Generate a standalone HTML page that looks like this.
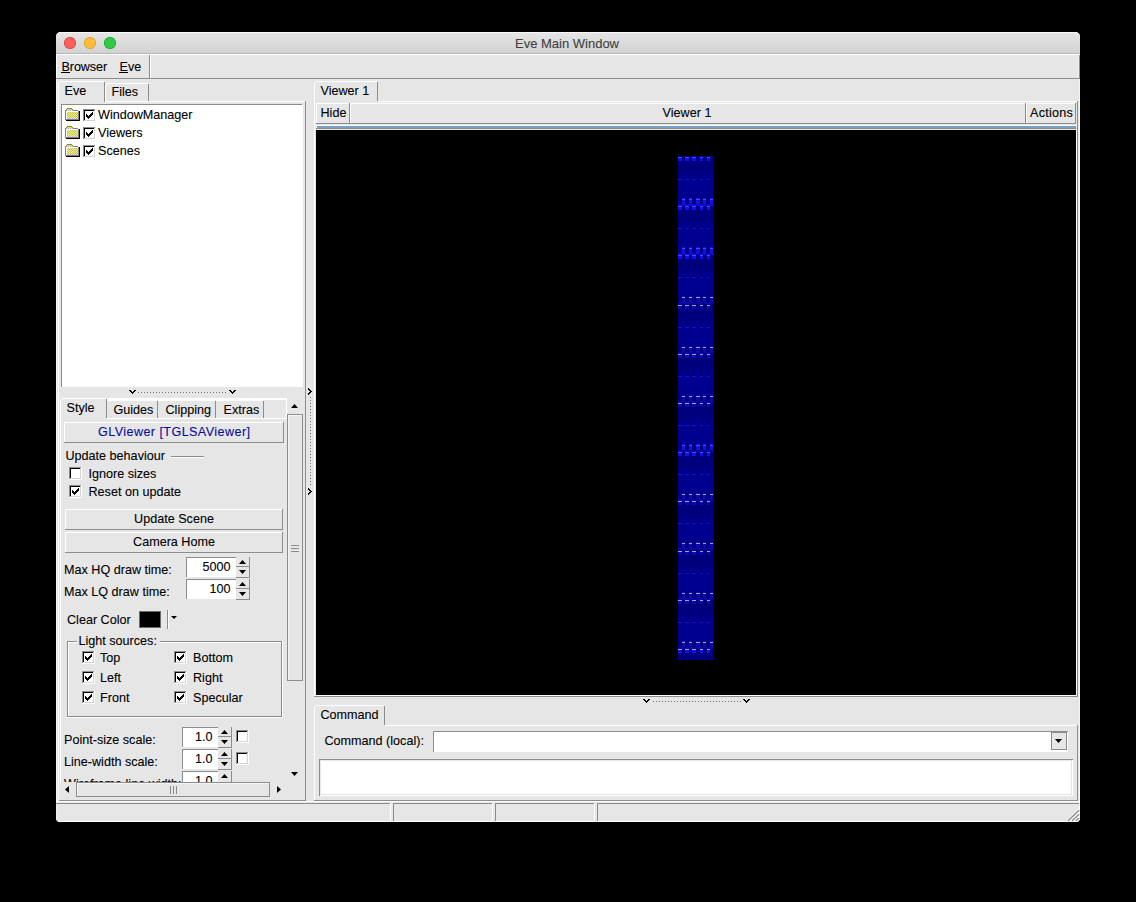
<!DOCTYPE html>
<html><head><meta charset="utf-8">
<style>
*{margin:0;padding:0;box-sizing:border-box}
html,body{width:1136px;height:902px;background:#000;overflow:hidden}
body{position:relative;font-family:"Liberation Sans",sans-serif;font-size:12.6px;color:#000}
.a{position:absolute;display:block}
.t{position:absolute;white-space:nowrap;line-height:normal;-webkit-text-stroke:0.1px currentColor}
</style></head><body>
<div class="a" style="left:56px;top:32px;width:1024px;height:790px;background:#e6e6e6;border-radius:5px 5px 3px 3px"></div>
<div class="a" style="left:56px;top:32px;width:1024px;height:21px;background:linear-gradient(#e6e6e6,#d2d2d2);border-radius:5px 5px 0 0;box-shadow:inset 0 1px 0 #f8f8f8"></div>
<div class="a" style="left:56px;top:53px;width:1024px;height:1px;background:#b6b6b6;"></div>
<div class="a" style="left:64px;top:37px;width:12px;height:12px;border-radius:50%;background:#fc605c;box-shadow:inset 0 0 0 0.8px #e0443e"></div>
<div class="a" style="left:84px;top:37px;width:12px;height:12px;border-radius:50%;background:#fdbc40;box-shadow:inset 0 0 0 0.8px #dea123"></div>
<div class="a" style="left:104px;top:37px;width:12px;height:12px;border-radius:50%;background:#34c84a;box-shadow:inset 0 0 0 0.8px #1aab29"></div>
<div class="t" style="left:267.0px;width:600px;text-align:center;top:36.23px;font-size:13px;color:#404040;letter-spacing:0px">Eve Main Window</div>
<div class="a" style="left:56px;top:54px;width:1024px;height:1px;background:#ffffff;"></div>
<div class="a" style="left:56px;top:54px;width:1px;height:25px;background:#ffffff;"></div>
<div class="a" style="left:56px;top:78px;width:1024px;height:1px;background:#8c8c8c;"></div>
<div class="a" style="left:149px;top:55px;width:1px;height:23px;background:#8c8c8c;"></div>
<div class="a" style="left:150px;top:55px;width:1px;height:23px;background:#ffffff;"></div>
<div class="t" style="left:61.5px;top:59.60px;font-size:12.6px;color:#000;letter-spacing:-0.1px">Browser</div>
<div class="t" style="left:119.5px;top:59.60px;font-size:12.6px;color:#000;">Eve</div>
<div class="a" style="left:61px;top:72px;width:9px;height:1px;background:#000;"></div>
<div class="a" style="left:119px;top:72px;width:9px;height:1px;background:#000;"></div>
<div class="a" style="left:1079px;top:79px;width:1px;height:743px;background:#f4f4f4;"></div>
<div class="a" style="left:56px;top:79px;width:1px;height:724px;background:#f8f8f8;"></div>
<div class="a" style="left:1079px;top:55px;width:1px;height:24px;background:#8c8c8c;"></div>
<div class="a" style="left:1078px;top:55px;width:1px;height:23px;background:#f0f0f0;"></div>
<div class="a" style="left:107px;top:83px;width:41px;height:1px;background:#ffffff;"></div>
<div class="a" style="left:106px;top:84px;width:1px;height:1px;background:#ffffff;"></div>
<div class="a" style="left:105px;top:85px;width:1px;height:17px;background:#ffffff;"></div>
<div class="a" style="left:148px;top:84px;width:1px;height:17px;background:#8c8c8c;"></div>
<div class="t" style="left:111.5px;top:84.60px;font-size:12.6px;color:#000;">Files</div>
<div class="a" style="left:60px;top:81px;width:44px;height:1px;background:#ffffff;"></div>
<div class="a" style="left:58px;top:83px;width:1px;height:20px;background:#ffffff;"></div>
<div class="a" style="left:59px;top:82px;width:1px;height:1px;background:#ffffff;"></div>
<div class="a" style="left:104px;top:82px;width:1px;height:20px;background:#8c8c8c;"></div>
<div class="t" style="left:64.5px;top:83.60px;font-size:12.6px;color:#000;">Eve</div>
<div class="a" style="left:105px;top:101px;width:200px;height:1px;background:#ffffff;"></div>
<div class="a" style="left:58px;top:101px;width:1px;height:300px;background:#ffffff;"></div>
<div class="a" style="left:305px;top:101px;width:1px;height:300px;background:#8c8c8c;"></div>
<div class="a" style="left:62px;top:105px;width:241px;height:282px;background:#ffffff;"></div>
<div class="a" style="left:61px;top:104px;width:241px;height:1px;background:#8c8c8c;"></div>
<div class="a" style="left:61px;top:104px;width:1px;height:283px;background:#8c8c8c;"></div>
<svg class="a" style="left:65px;top:108px" width="16" height="13" shape-rendering="crispEdges"><path d="M2 0h1v1h-1zM3 0h1v1h-1zM4 0h1v1h-1zM5 0h1v1h-1zM6 0h1v1h-1zM1 1h1v1h-1zM7 1h1v1h-1zM0 2h1v1h-1zM8 2h1v1h-1zM9 2h1v1h-1zM10 2h1v1h-1zM11 2h1v1h-1zM12 2h1v1h-1zM0 3h1v1h-1zM0 4h1v1h-1zM0 5h1v1h-1zM0 6h1v1h-1zM0 7h1v1h-1zM0 8h1v1h-1zM0 9h1v1h-1zM0 10h1v1h-1zM0 11h1v1h-1zM13 3h1v1h-1zM13 4h1v1h-1zM13 5h1v1h-1zM13 6h1v1h-1zM13 7h1v1h-1zM13 8h1v1h-1zM13 9h1v1h-1zM13 10h1v1h-1zM13 11h1v1h-1zM0 11h1v1h-1zM1 11h1v1h-1zM2 11h1v1h-1zM3 11h1v1h-1zM4 11h1v1h-1zM5 11h1v1h-1zM6 11h1v1h-1zM7 11h1v1h-1zM8 11h1v1h-1zM9 11h1v1h-1zM10 11h1v1h-1zM11 11h1v1h-1zM12 11h1v1h-1zM13 11h1v1h-1z" fill="#808080"/><path d="M14 3h1v1h-1zM14 4h1v1h-1zM14 5h1v1h-1zM14 6h1v1h-1zM14 7h1v1h-1zM14 8h1v1h-1zM14 9h1v1h-1zM14 10h1v1h-1zM14 11h1v1h-1zM14 12h1v1h-1zM1 12h1v1h-1zM2 12h1v1h-1zM3 12h1v1h-1zM4 12h1v1h-1zM5 12h1v1h-1zM6 12h1v1h-1zM7 12h1v1h-1zM8 12h1v1h-1zM9 12h1v1h-1zM10 12h1v1h-1zM11 12h1v1h-1zM12 12h1v1h-1zM13 12h1v1h-1zM14 12h1v1h-1z" fill="#000"/><path d="M1 3h1v1h-1zM2 3h1v1h-1zM3 3h1v1h-1zM4 3h1v1h-1zM5 3h1v1h-1zM6 3h1v1h-1zM7 3h1v1h-1zM8 3h1v1h-1zM9 3h1v1h-1zM10 3h1v1h-1zM11 3h1v1h-1zM12 3h1v1h-1zM1 2h1v1h-1zM1 3h1v1h-1zM1 4h1v1h-1zM1 5h1v1h-1zM1 6h1v1h-1zM1 7h1v1h-1zM1 8h1v1h-1zM1 9h1v1h-1zM1 10h1v1h-1z" fill="#fff"/><path d="M3 1h1v1h-1zM5 1h1v1h-1zM2 2h1v1h-1zM4 2h1v1h-1zM6 2h1v1h-1zM2 4h1v1h-1zM4 4h1v1h-1zM6 4h1v1h-1zM8 4h1v1h-1zM10 4h1v1h-1zM12 4h1v1h-1zM3 5h1v1h-1zM5 5h1v1h-1zM7 5h1v1h-1zM9 5h1v1h-1zM11 5h1v1h-1zM2 6h1v1h-1zM4 6h1v1h-1zM6 6h1v1h-1zM8 6h1v1h-1zM10 6h1v1h-1zM12 6h1v1h-1zM3 7h1v1h-1zM5 7h1v1h-1zM7 7h1v1h-1zM9 7h1v1h-1zM11 7h1v1h-1zM2 8h1v1h-1zM4 8h1v1h-1zM6 8h1v1h-1zM8 8h1v1h-1zM10 8h1v1h-1zM12 8h1v1h-1zM3 9h1v1h-1zM5 9h1v1h-1zM7 9h1v1h-1zM9 9h1v1h-1zM11 9h1v1h-1zM2 10h1v1h-1zM4 10h1v1h-1zM6 10h1v1h-1zM8 10h1v1h-1zM10 10h1v1h-1zM12 10h1v1h-1z" fill="#ffff00"/><path d="M2 1h1v1h-1zM4 1h1v1h-1zM6 1h1v1h-1zM1 2h1v1h-1zM3 2h1v1h-1zM5 2h1v1h-1zM7 2h1v1h-1zM3 4h1v1h-1zM5 4h1v1h-1zM7 4h1v1h-1zM9 4h1v1h-1zM11 4h1v1h-1zM2 5h1v1h-1zM4 5h1v1h-1zM6 5h1v1h-1zM8 5h1v1h-1zM10 5h1v1h-1zM12 5h1v1h-1zM3 6h1v1h-1zM5 6h1v1h-1zM7 6h1v1h-1zM9 6h1v1h-1zM11 6h1v1h-1zM2 7h1v1h-1zM4 7h1v1h-1zM6 7h1v1h-1zM8 7h1v1h-1zM10 7h1v1h-1zM12 7h1v1h-1zM3 8h1v1h-1zM5 8h1v1h-1zM7 8h1v1h-1zM9 8h1v1h-1zM11 8h1v1h-1zM2 9h1v1h-1zM4 9h1v1h-1zM6 9h1v1h-1zM8 9h1v1h-1zM10 9h1v1h-1zM12 9h1v1h-1zM3 10h1v1h-1zM5 10h1v1h-1zM7 10h1v1h-1zM9 10h1v1h-1zM11 10h1v1h-1z" fill="#b8b8c8"/></svg>
<div class="a" style="left:83px;top:109px;width:13px;height:1px;background:#8c8c8c;"></div>
<div class="a" style="left:83px;top:109px;width:1px;height:13px;background:#8c8c8c;"></div>
<div class="a" style="left:84px;top:110px;width:11px;height:1px;background:#000;"></div>
<div class="a" style="left:84px;top:110px;width:1px;height:11px;background:#000;"></div>
<div class="a" style="left:85px;top:111px;width:9px;height:9px;background:#ffffff;"></div>
<div class="a" style="left:84px;top:120px;width:11px;height:1px;background:#d4d4d4;"></div>
<div class="a" style="left:94px;top:110px;width:1px;height:11px;background:#d4d4d4;"></div>
<div class="a" style="left:83px;top:121px;width:13px;height:1px;background:#ffffff;"></div>
<div class="a" style="left:95px;top:109px;width:1px;height:13px;background:#ffffff;"></div>
<svg class="a" style="left:83px;top:109px" width="13" height="13" shape-rendering="crispEdges"><path d="M3 7h1v1h-1zM4 6h1v1h-1zM5 7h1v1h-1zM9 5h1v1h-1zM8 6h1v1h-1zM7 7h1v1h-1zM6 8h1v1h-1zM4 8h1v1h-1zM3 6h1v1h-1zM5 9h1v1h-1zM8 5h1v1h-1zM9 4h1v1h-1zM6 7h1v1h-1zM7 6h1v1h-1zM4 7h1v1h-1zM3 5h1v1h-1zM8 4h1v1h-1zM9 3h1v1h-1zM5 8h1v1h-1zM6 6h1v1h-1zM7 5h1v1h-1z" fill="#000"/></svg>
<div class="t" style="left:98px;top:107.60px;font-size:12.6px;color:#000;">WindowManager</div>
<svg class="a" style="left:65px;top:126px" width="16" height="13" shape-rendering="crispEdges"><path d="M2 0h1v1h-1zM3 0h1v1h-1zM4 0h1v1h-1zM5 0h1v1h-1zM6 0h1v1h-1zM1 1h1v1h-1zM7 1h1v1h-1zM0 2h1v1h-1zM8 2h1v1h-1zM9 2h1v1h-1zM10 2h1v1h-1zM11 2h1v1h-1zM12 2h1v1h-1zM0 3h1v1h-1zM0 4h1v1h-1zM0 5h1v1h-1zM0 6h1v1h-1zM0 7h1v1h-1zM0 8h1v1h-1zM0 9h1v1h-1zM0 10h1v1h-1zM0 11h1v1h-1zM13 3h1v1h-1zM13 4h1v1h-1zM13 5h1v1h-1zM13 6h1v1h-1zM13 7h1v1h-1zM13 8h1v1h-1zM13 9h1v1h-1zM13 10h1v1h-1zM13 11h1v1h-1zM0 11h1v1h-1zM1 11h1v1h-1zM2 11h1v1h-1zM3 11h1v1h-1zM4 11h1v1h-1zM5 11h1v1h-1zM6 11h1v1h-1zM7 11h1v1h-1zM8 11h1v1h-1zM9 11h1v1h-1zM10 11h1v1h-1zM11 11h1v1h-1zM12 11h1v1h-1zM13 11h1v1h-1z" fill="#808080"/><path d="M14 3h1v1h-1zM14 4h1v1h-1zM14 5h1v1h-1zM14 6h1v1h-1zM14 7h1v1h-1zM14 8h1v1h-1zM14 9h1v1h-1zM14 10h1v1h-1zM14 11h1v1h-1zM14 12h1v1h-1zM1 12h1v1h-1zM2 12h1v1h-1zM3 12h1v1h-1zM4 12h1v1h-1zM5 12h1v1h-1zM6 12h1v1h-1zM7 12h1v1h-1zM8 12h1v1h-1zM9 12h1v1h-1zM10 12h1v1h-1zM11 12h1v1h-1zM12 12h1v1h-1zM13 12h1v1h-1zM14 12h1v1h-1z" fill="#000"/><path d="M1 3h1v1h-1zM2 3h1v1h-1zM3 3h1v1h-1zM4 3h1v1h-1zM5 3h1v1h-1zM6 3h1v1h-1zM7 3h1v1h-1zM8 3h1v1h-1zM9 3h1v1h-1zM10 3h1v1h-1zM11 3h1v1h-1zM12 3h1v1h-1zM1 2h1v1h-1zM1 3h1v1h-1zM1 4h1v1h-1zM1 5h1v1h-1zM1 6h1v1h-1zM1 7h1v1h-1zM1 8h1v1h-1zM1 9h1v1h-1zM1 10h1v1h-1z" fill="#fff"/><path d="M3 1h1v1h-1zM5 1h1v1h-1zM2 2h1v1h-1zM4 2h1v1h-1zM6 2h1v1h-1zM2 4h1v1h-1zM4 4h1v1h-1zM6 4h1v1h-1zM8 4h1v1h-1zM10 4h1v1h-1zM12 4h1v1h-1zM3 5h1v1h-1zM5 5h1v1h-1zM7 5h1v1h-1zM9 5h1v1h-1zM11 5h1v1h-1zM2 6h1v1h-1zM4 6h1v1h-1zM6 6h1v1h-1zM8 6h1v1h-1zM10 6h1v1h-1zM12 6h1v1h-1zM3 7h1v1h-1zM5 7h1v1h-1zM7 7h1v1h-1zM9 7h1v1h-1zM11 7h1v1h-1zM2 8h1v1h-1zM4 8h1v1h-1zM6 8h1v1h-1zM8 8h1v1h-1zM10 8h1v1h-1zM12 8h1v1h-1zM3 9h1v1h-1zM5 9h1v1h-1zM7 9h1v1h-1zM9 9h1v1h-1zM11 9h1v1h-1zM2 10h1v1h-1zM4 10h1v1h-1zM6 10h1v1h-1zM8 10h1v1h-1zM10 10h1v1h-1zM12 10h1v1h-1z" fill="#ffff00"/><path d="M2 1h1v1h-1zM4 1h1v1h-1zM6 1h1v1h-1zM1 2h1v1h-1zM3 2h1v1h-1zM5 2h1v1h-1zM7 2h1v1h-1zM3 4h1v1h-1zM5 4h1v1h-1zM7 4h1v1h-1zM9 4h1v1h-1zM11 4h1v1h-1zM2 5h1v1h-1zM4 5h1v1h-1zM6 5h1v1h-1zM8 5h1v1h-1zM10 5h1v1h-1zM12 5h1v1h-1zM3 6h1v1h-1zM5 6h1v1h-1zM7 6h1v1h-1zM9 6h1v1h-1zM11 6h1v1h-1zM2 7h1v1h-1zM4 7h1v1h-1zM6 7h1v1h-1zM8 7h1v1h-1zM10 7h1v1h-1zM12 7h1v1h-1zM3 8h1v1h-1zM5 8h1v1h-1zM7 8h1v1h-1zM9 8h1v1h-1zM11 8h1v1h-1zM2 9h1v1h-1zM4 9h1v1h-1zM6 9h1v1h-1zM8 9h1v1h-1zM10 9h1v1h-1zM12 9h1v1h-1zM3 10h1v1h-1zM5 10h1v1h-1zM7 10h1v1h-1zM9 10h1v1h-1zM11 10h1v1h-1z" fill="#b8b8c8"/></svg>
<div class="a" style="left:83px;top:127px;width:13px;height:1px;background:#8c8c8c;"></div>
<div class="a" style="left:83px;top:127px;width:1px;height:13px;background:#8c8c8c;"></div>
<div class="a" style="left:84px;top:128px;width:11px;height:1px;background:#000;"></div>
<div class="a" style="left:84px;top:128px;width:1px;height:11px;background:#000;"></div>
<div class="a" style="left:85px;top:129px;width:9px;height:9px;background:#ffffff;"></div>
<div class="a" style="left:84px;top:138px;width:11px;height:1px;background:#d4d4d4;"></div>
<div class="a" style="left:94px;top:128px;width:1px;height:11px;background:#d4d4d4;"></div>
<div class="a" style="left:83px;top:139px;width:13px;height:1px;background:#ffffff;"></div>
<div class="a" style="left:95px;top:127px;width:1px;height:13px;background:#ffffff;"></div>
<svg class="a" style="left:83px;top:127px" width="13" height="13" shape-rendering="crispEdges"><path d="M3 7h1v1h-1zM4 6h1v1h-1zM5 7h1v1h-1zM9 5h1v1h-1zM8 6h1v1h-1zM7 7h1v1h-1zM6 8h1v1h-1zM4 8h1v1h-1zM3 6h1v1h-1zM5 9h1v1h-1zM8 5h1v1h-1zM9 4h1v1h-1zM6 7h1v1h-1zM7 6h1v1h-1zM4 7h1v1h-1zM3 5h1v1h-1zM8 4h1v1h-1zM9 3h1v1h-1zM5 8h1v1h-1zM6 6h1v1h-1zM7 5h1v1h-1z" fill="#000"/></svg>
<div class="t" style="left:98px;top:125.60px;font-size:12.6px;color:#000;">Viewers</div>
<svg class="a" style="left:65px;top:144px" width="16" height="13" shape-rendering="crispEdges"><path d="M2 0h1v1h-1zM3 0h1v1h-1zM4 0h1v1h-1zM5 0h1v1h-1zM6 0h1v1h-1zM1 1h1v1h-1zM7 1h1v1h-1zM0 2h1v1h-1zM8 2h1v1h-1zM9 2h1v1h-1zM10 2h1v1h-1zM11 2h1v1h-1zM12 2h1v1h-1zM0 3h1v1h-1zM0 4h1v1h-1zM0 5h1v1h-1zM0 6h1v1h-1zM0 7h1v1h-1zM0 8h1v1h-1zM0 9h1v1h-1zM0 10h1v1h-1zM0 11h1v1h-1zM13 3h1v1h-1zM13 4h1v1h-1zM13 5h1v1h-1zM13 6h1v1h-1zM13 7h1v1h-1zM13 8h1v1h-1zM13 9h1v1h-1zM13 10h1v1h-1zM13 11h1v1h-1zM0 11h1v1h-1zM1 11h1v1h-1zM2 11h1v1h-1zM3 11h1v1h-1zM4 11h1v1h-1zM5 11h1v1h-1zM6 11h1v1h-1zM7 11h1v1h-1zM8 11h1v1h-1zM9 11h1v1h-1zM10 11h1v1h-1zM11 11h1v1h-1zM12 11h1v1h-1zM13 11h1v1h-1z" fill="#808080"/><path d="M14 3h1v1h-1zM14 4h1v1h-1zM14 5h1v1h-1zM14 6h1v1h-1zM14 7h1v1h-1zM14 8h1v1h-1zM14 9h1v1h-1zM14 10h1v1h-1zM14 11h1v1h-1zM14 12h1v1h-1zM1 12h1v1h-1zM2 12h1v1h-1zM3 12h1v1h-1zM4 12h1v1h-1zM5 12h1v1h-1zM6 12h1v1h-1zM7 12h1v1h-1zM8 12h1v1h-1zM9 12h1v1h-1zM10 12h1v1h-1zM11 12h1v1h-1zM12 12h1v1h-1zM13 12h1v1h-1zM14 12h1v1h-1z" fill="#000"/><path d="M1 3h1v1h-1zM2 3h1v1h-1zM3 3h1v1h-1zM4 3h1v1h-1zM5 3h1v1h-1zM6 3h1v1h-1zM7 3h1v1h-1zM8 3h1v1h-1zM9 3h1v1h-1zM10 3h1v1h-1zM11 3h1v1h-1zM12 3h1v1h-1zM1 2h1v1h-1zM1 3h1v1h-1zM1 4h1v1h-1zM1 5h1v1h-1zM1 6h1v1h-1zM1 7h1v1h-1zM1 8h1v1h-1zM1 9h1v1h-1zM1 10h1v1h-1z" fill="#fff"/><path d="M3 1h1v1h-1zM5 1h1v1h-1zM2 2h1v1h-1zM4 2h1v1h-1zM6 2h1v1h-1zM2 4h1v1h-1zM4 4h1v1h-1zM6 4h1v1h-1zM8 4h1v1h-1zM10 4h1v1h-1zM12 4h1v1h-1zM3 5h1v1h-1zM5 5h1v1h-1zM7 5h1v1h-1zM9 5h1v1h-1zM11 5h1v1h-1zM2 6h1v1h-1zM4 6h1v1h-1zM6 6h1v1h-1zM8 6h1v1h-1zM10 6h1v1h-1zM12 6h1v1h-1zM3 7h1v1h-1zM5 7h1v1h-1zM7 7h1v1h-1zM9 7h1v1h-1zM11 7h1v1h-1zM2 8h1v1h-1zM4 8h1v1h-1zM6 8h1v1h-1zM8 8h1v1h-1zM10 8h1v1h-1zM12 8h1v1h-1zM3 9h1v1h-1zM5 9h1v1h-1zM7 9h1v1h-1zM9 9h1v1h-1zM11 9h1v1h-1zM2 10h1v1h-1zM4 10h1v1h-1zM6 10h1v1h-1zM8 10h1v1h-1zM10 10h1v1h-1zM12 10h1v1h-1z" fill="#ffff00"/><path d="M2 1h1v1h-1zM4 1h1v1h-1zM6 1h1v1h-1zM1 2h1v1h-1zM3 2h1v1h-1zM5 2h1v1h-1zM7 2h1v1h-1zM3 4h1v1h-1zM5 4h1v1h-1zM7 4h1v1h-1zM9 4h1v1h-1zM11 4h1v1h-1zM2 5h1v1h-1zM4 5h1v1h-1zM6 5h1v1h-1zM8 5h1v1h-1zM10 5h1v1h-1zM12 5h1v1h-1zM3 6h1v1h-1zM5 6h1v1h-1zM7 6h1v1h-1zM9 6h1v1h-1zM11 6h1v1h-1zM2 7h1v1h-1zM4 7h1v1h-1zM6 7h1v1h-1zM8 7h1v1h-1zM10 7h1v1h-1zM12 7h1v1h-1zM3 8h1v1h-1zM5 8h1v1h-1zM7 8h1v1h-1zM9 8h1v1h-1zM11 8h1v1h-1zM2 9h1v1h-1zM4 9h1v1h-1zM6 9h1v1h-1zM8 9h1v1h-1zM10 9h1v1h-1zM12 9h1v1h-1zM3 10h1v1h-1zM5 10h1v1h-1zM7 10h1v1h-1zM9 10h1v1h-1zM11 10h1v1h-1z" fill="#b8b8c8"/></svg>
<div class="a" style="left:83px;top:145px;width:13px;height:1px;background:#8c8c8c;"></div>
<div class="a" style="left:83px;top:145px;width:1px;height:13px;background:#8c8c8c;"></div>
<div class="a" style="left:84px;top:146px;width:11px;height:1px;background:#000;"></div>
<div class="a" style="left:84px;top:146px;width:1px;height:11px;background:#000;"></div>
<div class="a" style="left:85px;top:147px;width:9px;height:9px;background:#ffffff;"></div>
<div class="a" style="left:84px;top:156px;width:11px;height:1px;background:#d4d4d4;"></div>
<div class="a" style="left:94px;top:146px;width:1px;height:11px;background:#d4d4d4;"></div>
<div class="a" style="left:83px;top:157px;width:13px;height:1px;background:#ffffff;"></div>
<div class="a" style="left:95px;top:145px;width:1px;height:13px;background:#ffffff;"></div>
<svg class="a" style="left:83px;top:145px" width="13" height="13" shape-rendering="crispEdges"><path d="M3 7h1v1h-1zM4 6h1v1h-1zM5 7h1v1h-1zM9 5h1v1h-1zM8 6h1v1h-1zM7 7h1v1h-1zM6 8h1v1h-1zM4 8h1v1h-1zM3 6h1v1h-1zM5 9h1v1h-1zM8 5h1v1h-1zM9 4h1v1h-1zM6 7h1v1h-1zM7 6h1v1h-1zM4 7h1v1h-1zM3 5h1v1h-1zM8 4h1v1h-1zM9 3h1v1h-1zM5 8h1v1h-1zM6 6h1v1h-1zM7 5h1v1h-1z" fill="#000"/></svg>
<div class="t" style="left:98px;top:143.60px;font-size:12.6px;color:#000;">Scenes</div>
<svg class="a" style="left:129px;top:390px" width="7" height="4" shape-rendering="crispEdges"><path d="M0 0h1v1h-1zM1 0h1v1h-1zM1 1h1v1h-1zM2 1h1v1h-1zM2 2h1v1h-1zM3 2h1v1h-1zM3 3h1v1h-1zM4 2h1v1h-1zM4 1h1v1h-1zM5 1h1v1h-1zM5 0h1v1h-1zM6 0h1v1h-1z" fill="#000"/></svg>
<svg class="a" style="left:229px;top:390px" width="7" height="4" shape-rendering="crispEdges"><path d="M0 0h1v1h-1zM1 0h1v1h-1zM1 1h1v1h-1zM2 1h1v1h-1zM2 2h1v1h-1zM3 2h1v1h-1zM3 3h1v1h-1zM4 2h1v1h-1zM4 1h1v1h-1zM5 1h1v1h-1zM5 0h1v1h-1zM6 0h1v1h-1z" fill="#000"/></svg>
<div class="a" style="left:138px;top:392px;width:90px;height:1px;background:repeating-linear-gradient(90deg,#6e6e6e 0 1px,transparent 1px 3px)"></div>
<div class="a" style="left:107px;top:398px;width:180px;height:1px;background:#ffffff;"></div>
<div class="a" style="left:107px;top:399px;width:180px;height:1px;background:#ffffff;"></div>
<div class="a" style="left:286px;top:398px;width:1px;height:21px;background:#ffffff;"></div>
<div class="a" style="left:62px;top:398px;width:44px;height:1px;background:#ffffff;"></div>
<div class="a" style="left:60px;top:400px;width:1px;height:19px;background:#ffffff;"></div>
<div class="a" style="left:61px;top:399px;width:1px;height:1px;background:#ffffff;"></div>
<div class="a" style="left:106px;top:399px;width:1px;height:19px;background:#8c8c8c;"></div>
<div class="t" style="left:66.5px;top:400.60px;font-size:12.6px;color:#000;">Style</div>
<div class="a" style="left:107px;top:400px;width:50px;height:1px;background:#ffffff;"></div>
<div class="a" style="left:157px;top:401px;width:1px;height:17px;background:#8c8c8c;"></div>
<div class="t" style="left:113.5px;top:402.60px;font-size:12.6px;color:#000;">Guides</div>
<div class="a" style="left:158px;top:400px;width:57px;height:1px;background:#ffffff;"></div>
<div class="a" style="left:215px;top:401px;width:1px;height:17px;background:#8c8c8c;"></div>
<div class="t" style="left:165.5px;top:402.60px;font-size:12.6px;color:#000;">Clipping</div>
<div class="a" style="left:216px;top:400px;width:47px;height:1px;background:#ffffff;"></div>
<div class="a" style="left:263px;top:401px;width:1px;height:17px;background:#8c8c8c;"></div>
<div class="t" style="left:223.5px;top:402.60px;font-size:12.6px;color:#000;">Extras</div>
<div class="a" style="left:107px;top:418px;width:180px;height:1px;background:#ffffff;"></div>
<div class="a" style="left:60px;top:418px;width:1px;height:364px;background:#ffffff;"></div>
<div class="a" style="left:64px;top:422px;width:220px;height:1px;background:#ffffff;"></div>
<div class="a" style="left:64px;top:422px;width:1px;height:21px;background:#ffffff;"></div>
<div class="a" style="left:64px;top:442px;width:220px;height:1px;background:#8c8c8c;"></div>
<div class="a" style="left:283px;top:422px;width:1px;height:21px;background:#8c8c8c;"></div>
<div class="t" style="left:-125.79px;width:600px;text-align:center;top:424.60px;font-size:12.6px;color:#0c0c9a;letter-spacing:0.42px">GLViewer [TGLSAViewer]</div>
<div class="t" style="left:65.5px;top:448.60px;font-size:12.6px;color:#000;">Update behaviour</div>
<div class="a" style="left:171px;top:456px;width:33px;height:1px;background:#8c8c8c;"></div>
<div class="a" style="left:171px;top:457px;width:33px;height:1px;background:#ffffff;"></div>
<div class="a" style="left:69px;top:467px;width:13px;height:1px;background:#8c8c8c;"></div>
<div class="a" style="left:69px;top:467px;width:1px;height:13px;background:#8c8c8c;"></div>
<div class="a" style="left:70px;top:468px;width:11px;height:1px;background:#000;"></div>
<div class="a" style="left:70px;top:468px;width:1px;height:11px;background:#000;"></div>
<div class="a" style="left:71px;top:469px;width:9px;height:9px;background:#ffffff;"></div>
<div class="a" style="left:70px;top:478px;width:11px;height:1px;background:#d4d4d4;"></div>
<div class="a" style="left:80px;top:468px;width:1px;height:11px;background:#d4d4d4;"></div>
<div class="a" style="left:69px;top:479px;width:13px;height:1px;background:#ffffff;"></div>
<div class="a" style="left:81px;top:467px;width:1px;height:13px;background:#ffffff;"></div>
<div class="t" style="left:88.5px;top:466.60px;font-size:12.6px;color:#000;">Ignore sizes</div>
<div class="a" style="left:69px;top:485px;width:13px;height:1px;background:#8c8c8c;"></div>
<div class="a" style="left:69px;top:485px;width:1px;height:13px;background:#8c8c8c;"></div>
<div class="a" style="left:70px;top:486px;width:11px;height:1px;background:#000;"></div>
<div class="a" style="left:70px;top:486px;width:1px;height:11px;background:#000;"></div>
<div class="a" style="left:71px;top:487px;width:9px;height:9px;background:#ffffff;"></div>
<div class="a" style="left:70px;top:496px;width:11px;height:1px;background:#d4d4d4;"></div>
<div class="a" style="left:80px;top:486px;width:1px;height:11px;background:#d4d4d4;"></div>
<div class="a" style="left:69px;top:497px;width:13px;height:1px;background:#ffffff;"></div>
<div class="a" style="left:81px;top:485px;width:1px;height:13px;background:#ffffff;"></div>
<svg class="a" style="left:69px;top:485px" width="13" height="13" shape-rendering="crispEdges"><path d="M3 7h1v1h-1zM4 6h1v1h-1zM5 7h1v1h-1zM9 5h1v1h-1zM8 6h1v1h-1zM7 7h1v1h-1zM6 8h1v1h-1zM4 8h1v1h-1zM3 6h1v1h-1zM5 9h1v1h-1zM8 5h1v1h-1zM9 4h1v1h-1zM6 7h1v1h-1zM7 6h1v1h-1zM4 7h1v1h-1zM3 5h1v1h-1zM8 4h1v1h-1zM9 3h1v1h-1zM5 8h1v1h-1zM6 6h1v1h-1zM7 5h1v1h-1z" fill="#000"/></svg>
<div class="t" style="left:88.5px;top:484.60px;font-size:12.6px;color:#000;">Reset on update</div>
<div class="a" style="left:65px;top:509px;width:218px;height:1px;background:#ffffff;"></div>
<div class="a" style="left:65px;top:509px;width:1px;height:21px;background:#ffffff;"></div>
<div class="a" style="left:65px;top:529px;width:218px;height:1px;background:#8c8c8c;"></div>
<div class="a" style="left:282px;top:509px;width:1px;height:21px;background:#8c8c8c;"></div>
<div class="t" style="left:-126.0px;width:600px;text-align:center;top:512.10px;font-size:12.6px;color:#000;letter-spacing:0px">Update Scene</div>
<div class="a" style="left:65px;top:532px;width:218px;height:1px;background:#ffffff;"></div>
<div class="a" style="left:65px;top:532px;width:1px;height:21px;background:#ffffff;"></div>
<div class="a" style="left:65px;top:552px;width:218px;height:1px;background:#8c8c8c;"></div>
<div class="a" style="left:282px;top:532px;width:1px;height:21px;background:#8c8c8c;"></div>
<div class="t" style="left:-126.0px;width:600px;text-align:center;top:535.10px;font-size:12.6px;color:#000;letter-spacing:0px">Camera Home</div>
<div class="t" style="left:64px;top:562.60px;font-size:12.6px;color:#000;">Max HQ draw time:</div>
<div class="a" style="left:186px;top:557px;width:50px;height:20px;background:#ffffff;"></div>
<div class="a" style="left:186px;top:557px;width:50px;height:1px;background:#8c8c8c;"></div>
<div class="a" style="left:186px;top:557px;width:1px;height:20px;background:#8c8c8c;"></div>
<div class="t" style="right:905.5px;top:559.60px;font-size:12.6px;color:#000">5000</div>
<div class="a" style="left:236px;top:557px;width:14px;height:20px;background:#e6e6e6;"></div>
<div class="a" style="left:236px;top:566px;width:14px;height:1px;background:#8c8c8c;"></div>
<div class="a" style="left:249px;top:557px;width:1px;height:20px;background:#8c8c8c;"></div>
<div class="a" style="left:236px;top:577px;width:14px;height:1px;background:#8c8c8c;"></div>
<svg class="a" style="left:239px;top:560px" width="7" height="4"><polygon points="3.5,0 7,4 0,4" fill="#000"/></svg>
<svg class="a" style="left:239px;top:570px" width="7" height="4"><polygon points="0,0 7,0 3.5,4" fill="#000"/></svg>
<div class="t" style="left:64px;top:584.60px;font-size:12.6px;color:#000;">Max LQ draw time:</div>
<div class="a" style="left:186px;top:579px;width:50px;height:20px;background:#ffffff;"></div>
<div class="a" style="left:186px;top:579px;width:50px;height:1px;background:#8c8c8c;"></div>
<div class="a" style="left:186px;top:579px;width:1px;height:20px;background:#8c8c8c;"></div>
<div class="t" style="right:905.5px;top:581.60px;font-size:12.6px;color:#000">100</div>
<div class="a" style="left:236px;top:579px;width:14px;height:20px;background:#e6e6e6;"></div>
<div class="a" style="left:236px;top:588px;width:14px;height:1px;background:#8c8c8c;"></div>
<div class="a" style="left:249px;top:579px;width:1px;height:20px;background:#8c8c8c;"></div>
<div class="a" style="left:236px;top:599px;width:14px;height:1px;background:#8c8c8c;"></div>
<svg class="a" style="left:239px;top:582px" width="7" height="4"><polygon points="3.5,0 7,4 0,4" fill="#000"/></svg>
<svg class="a" style="left:239px;top:592px" width="7" height="4"><polygon points="0,0 7,0 3.5,4" fill="#000"/></svg>
<div class="t" style="left:67px;top:613.10px;font-size:12.6px;color:#000;">Clear Color</div>
<div class="a" style="left:139px;top:611px;width:22px;height:17px;background:#000;border:1px solid #6a6a6a"></div>
<div class="a" style="left:167px;top:610px;width:1px;height:19px;background:#8c8c8c;"></div>
<div class="a" style="left:168px;top:610px;width:1px;height:19px;background:#ffffff;"></div>
<svg class="a" style="left:171px;top:616px" width="6" height="3"><polygon points="0,0 6,0 3.0,3" fill="#000"/></svg>
<div class="a" style="left:67px;top:641px;width:10px;height:1px;background:#8c8c8c;"></div>
<div class="a" style="left:160px;top:641px;width:122px;height:1px;background:#8c8c8c;"></div>
<div class="a" style="left:68px;top:642px;width:9px;height:1px;background:#ffffff;"></div>
<div class="a" style="left:160px;top:642px;width:121px;height:1px;background:#ffffff;"></div>
<div class="a" style="left:67px;top:641px;width:1px;height:76px;background:#8c8c8c;"></div>
<div class="a" style="left:68px;top:642px;width:1px;height:74px;background:#ffffff;"></div>
<div class="a" style="left:281px;top:641px;width:1px;height:76px;background:#8c8c8c;"></div>
<div class="a" style="left:282px;top:641px;width:1px;height:77px;background:#ffffff;"></div>
<div class="a" style="left:67px;top:716px;width:215px;height:1px;background:#8c8c8c;"></div>
<div class="a" style="left:67px;top:717px;width:216px;height:1px;background:#ffffff;"></div>
<div class="t" style="left:78.5px;top:633.60px;font-size:12.6px;color:#000;">Light sources:</div>
<div class="a" style="left:82px;top:651px;width:13px;height:1px;background:#8c8c8c;"></div>
<div class="a" style="left:82px;top:651px;width:1px;height:13px;background:#8c8c8c;"></div>
<div class="a" style="left:83px;top:652px;width:11px;height:1px;background:#000;"></div>
<div class="a" style="left:83px;top:652px;width:1px;height:11px;background:#000;"></div>
<div class="a" style="left:84px;top:653px;width:9px;height:9px;background:#ffffff;"></div>
<div class="a" style="left:83px;top:662px;width:11px;height:1px;background:#d4d4d4;"></div>
<div class="a" style="left:93px;top:652px;width:1px;height:11px;background:#d4d4d4;"></div>
<div class="a" style="left:82px;top:663px;width:13px;height:1px;background:#ffffff;"></div>
<div class="a" style="left:94px;top:651px;width:1px;height:13px;background:#ffffff;"></div>
<svg class="a" style="left:82px;top:651px" width="13" height="13" shape-rendering="crispEdges"><path d="M3 7h1v1h-1zM4 6h1v1h-1zM5 7h1v1h-1zM9 5h1v1h-1zM8 6h1v1h-1zM7 7h1v1h-1zM6 8h1v1h-1zM4 8h1v1h-1zM3 6h1v1h-1zM5 9h1v1h-1zM8 5h1v1h-1zM9 4h1v1h-1zM6 7h1v1h-1zM7 6h1v1h-1zM4 7h1v1h-1zM3 5h1v1h-1zM8 4h1v1h-1zM9 3h1v1h-1zM5 8h1v1h-1zM6 6h1v1h-1zM7 5h1v1h-1z" fill="#000"/></svg>
<div class="t" style="left:100px;top:651.10px;font-size:12.6px;color:#000;">Top</div>
<div class="a" style="left:174px;top:651px;width:13px;height:1px;background:#8c8c8c;"></div>
<div class="a" style="left:174px;top:651px;width:1px;height:13px;background:#8c8c8c;"></div>
<div class="a" style="left:175px;top:652px;width:11px;height:1px;background:#000;"></div>
<div class="a" style="left:175px;top:652px;width:1px;height:11px;background:#000;"></div>
<div class="a" style="left:176px;top:653px;width:9px;height:9px;background:#ffffff;"></div>
<div class="a" style="left:175px;top:662px;width:11px;height:1px;background:#d4d4d4;"></div>
<div class="a" style="left:185px;top:652px;width:1px;height:11px;background:#d4d4d4;"></div>
<div class="a" style="left:174px;top:663px;width:13px;height:1px;background:#ffffff;"></div>
<div class="a" style="left:186px;top:651px;width:1px;height:13px;background:#ffffff;"></div>
<svg class="a" style="left:174px;top:651px" width="13" height="13" shape-rendering="crispEdges"><path d="M3 7h1v1h-1zM4 6h1v1h-1zM5 7h1v1h-1zM9 5h1v1h-1zM8 6h1v1h-1zM7 7h1v1h-1zM6 8h1v1h-1zM4 8h1v1h-1zM3 6h1v1h-1zM5 9h1v1h-1zM8 5h1v1h-1zM9 4h1v1h-1zM6 7h1v1h-1zM7 6h1v1h-1zM4 7h1v1h-1zM3 5h1v1h-1zM8 4h1v1h-1zM9 3h1v1h-1zM5 8h1v1h-1zM6 6h1v1h-1zM7 5h1v1h-1z" fill="#000"/></svg>
<div class="t" style="left:193px;top:651.10px;font-size:12.6px;color:#000;">Bottom</div>
<div class="a" style="left:82px;top:671px;width:13px;height:1px;background:#8c8c8c;"></div>
<div class="a" style="left:82px;top:671px;width:1px;height:13px;background:#8c8c8c;"></div>
<div class="a" style="left:83px;top:672px;width:11px;height:1px;background:#000;"></div>
<div class="a" style="left:83px;top:672px;width:1px;height:11px;background:#000;"></div>
<div class="a" style="left:84px;top:673px;width:9px;height:9px;background:#ffffff;"></div>
<div class="a" style="left:83px;top:682px;width:11px;height:1px;background:#d4d4d4;"></div>
<div class="a" style="left:93px;top:672px;width:1px;height:11px;background:#d4d4d4;"></div>
<div class="a" style="left:82px;top:683px;width:13px;height:1px;background:#ffffff;"></div>
<div class="a" style="left:94px;top:671px;width:1px;height:13px;background:#ffffff;"></div>
<svg class="a" style="left:82px;top:671px" width="13" height="13" shape-rendering="crispEdges"><path d="M3 7h1v1h-1zM4 6h1v1h-1zM5 7h1v1h-1zM9 5h1v1h-1zM8 6h1v1h-1zM7 7h1v1h-1zM6 8h1v1h-1zM4 8h1v1h-1zM3 6h1v1h-1zM5 9h1v1h-1zM8 5h1v1h-1zM9 4h1v1h-1zM6 7h1v1h-1zM7 6h1v1h-1zM4 7h1v1h-1zM3 5h1v1h-1zM8 4h1v1h-1zM9 3h1v1h-1zM5 8h1v1h-1zM6 6h1v1h-1zM7 5h1v1h-1z" fill="#000"/></svg>
<div class="t" style="left:100px;top:671.10px;font-size:12.6px;color:#000;">Left</div>
<div class="a" style="left:174px;top:671px;width:13px;height:1px;background:#8c8c8c;"></div>
<div class="a" style="left:174px;top:671px;width:1px;height:13px;background:#8c8c8c;"></div>
<div class="a" style="left:175px;top:672px;width:11px;height:1px;background:#000;"></div>
<div class="a" style="left:175px;top:672px;width:1px;height:11px;background:#000;"></div>
<div class="a" style="left:176px;top:673px;width:9px;height:9px;background:#ffffff;"></div>
<div class="a" style="left:175px;top:682px;width:11px;height:1px;background:#d4d4d4;"></div>
<div class="a" style="left:185px;top:672px;width:1px;height:11px;background:#d4d4d4;"></div>
<div class="a" style="left:174px;top:683px;width:13px;height:1px;background:#ffffff;"></div>
<div class="a" style="left:186px;top:671px;width:1px;height:13px;background:#ffffff;"></div>
<svg class="a" style="left:174px;top:671px" width="13" height="13" shape-rendering="crispEdges"><path d="M3 7h1v1h-1zM4 6h1v1h-1zM5 7h1v1h-1zM9 5h1v1h-1zM8 6h1v1h-1zM7 7h1v1h-1zM6 8h1v1h-1zM4 8h1v1h-1zM3 6h1v1h-1zM5 9h1v1h-1zM8 5h1v1h-1zM9 4h1v1h-1zM6 7h1v1h-1zM7 6h1v1h-1zM4 7h1v1h-1zM3 5h1v1h-1zM8 4h1v1h-1zM9 3h1v1h-1zM5 8h1v1h-1zM6 6h1v1h-1zM7 5h1v1h-1z" fill="#000"/></svg>
<div class="t" style="left:193px;top:671.10px;font-size:12.6px;color:#000;">Right</div>
<div class="a" style="left:82px;top:691px;width:13px;height:1px;background:#8c8c8c;"></div>
<div class="a" style="left:82px;top:691px;width:1px;height:13px;background:#8c8c8c;"></div>
<div class="a" style="left:83px;top:692px;width:11px;height:1px;background:#000;"></div>
<div class="a" style="left:83px;top:692px;width:1px;height:11px;background:#000;"></div>
<div class="a" style="left:84px;top:693px;width:9px;height:9px;background:#ffffff;"></div>
<div class="a" style="left:83px;top:702px;width:11px;height:1px;background:#d4d4d4;"></div>
<div class="a" style="left:93px;top:692px;width:1px;height:11px;background:#d4d4d4;"></div>
<div class="a" style="left:82px;top:703px;width:13px;height:1px;background:#ffffff;"></div>
<div class="a" style="left:94px;top:691px;width:1px;height:13px;background:#ffffff;"></div>
<svg class="a" style="left:82px;top:691px" width="13" height="13" shape-rendering="crispEdges"><path d="M3 7h1v1h-1zM4 6h1v1h-1zM5 7h1v1h-1zM9 5h1v1h-1zM8 6h1v1h-1zM7 7h1v1h-1zM6 8h1v1h-1zM4 8h1v1h-1zM3 6h1v1h-1zM5 9h1v1h-1zM8 5h1v1h-1zM9 4h1v1h-1zM6 7h1v1h-1zM7 6h1v1h-1zM4 7h1v1h-1zM3 5h1v1h-1zM8 4h1v1h-1zM9 3h1v1h-1zM5 8h1v1h-1zM6 6h1v1h-1zM7 5h1v1h-1z" fill="#000"/></svg>
<div class="t" style="left:100px;top:691.10px;font-size:12.6px;color:#000;">Front</div>
<div class="a" style="left:174px;top:691px;width:13px;height:1px;background:#8c8c8c;"></div>
<div class="a" style="left:174px;top:691px;width:1px;height:13px;background:#8c8c8c;"></div>
<div class="a" style="left:175px;top:692px;width:11px;height:1px;background:#000;"></div>
<div class="a" style="left:175px;top:692px;width:1px;height:11px;background:#000;"></div>
<div class="a" style="left:176px;top:693px;width:9px;height:9px;background:#ffffff;"></div>
<div class="a" style="left:175px;top:702px;width:11px;height:1px;background:#d4d4d4;"></div>
<div class="a" style="left:185px;top:692px;width:1px;height:11px;background:#d4d4d4;"></div>
<div class="a" style="left:174px;top:703px;width:13px;height:1px;background:#ffffff;"></div>
<div class="a" style="left:186px;top:691px;width:1px;height:13px;background:#ffffff;"></div>
<svg class="a" style="left:174px;top:691px" width="13" height="13" shape-rendering="crispEdges"><path d="M3 7h1v1h-1zM4 6h1v1h-1zM5 7h1v1h-1zM9 5h1v1h-1zM8 6h1v1h-1zM7 7h1v1h-1zM6 8h1v1h-1zM4 8h1v1h-1zM3 6h1v1h-1zM5 9h1v1h-1zM8 5h1v1h-1zM9 4h1v1h-1zM6 7h1v1h-1zM7 6h1v1h-1zM4 7h1v1h-1zM3 5h1v1h-1zM8 4h1v1h-1zM9 3h1v1h-1zM5 8h1v1h-1zM6 6h1v1h-1zM7 5h1v1h-1z" fill="#000"/></svg>
<div class="t" style="left:193px;top:691.10px;font-size:12.6px;color:#000;">Specular</div>
<div class="t" style="left:64px;top:733.10px;font-size:12.6px;color:#000;">Point-size scale:</div>
<div class="a" style="left:182px;top:727px;width:36px;height:20px;background:#ffffff;"></div>
<div class="a" style="left:182px;top:727px;width:36px;height:1px;background:#8c8c8c;"></div>
<div class="a" style="left:182px;top:727px;width:1px;height:20px;background:#8c8c8c;"></div>
<div class="t" style="right:923.5px;top:729.60px;font-size:12.6px;color:#000">1.0</div>
<div class="a" style="left:218px;top:727px;width:14px;height:20px;background:#e6e6e6;"></div>
<div class="a" style="left:218px;top:736px;width:14px;height:1px;background:#8c8c8c;"></div>
<div class="a" style="left:231px;top:727px;width:1px;height:20px;background:#8c8c8c;"></div>
<div class="a" style="left:218px;top:747px;width:14px;height:1px;background:#8c8c8c;"></div>
<svg class="a" style="left:221px;top:730px" width="7" height="4"><polygon points="3.5,0 7,4 0,4" fill="#000"/></svg>
<svg class="a" style="left:221px;top:740px" width="7" height="4"><polygon points="0,0 7,0 3.5,4" fill="#000"/></svg>
<div class="a" style="left:236px;top:730px;width:13px;height:1px;background:#8c8c8c;"></div>
<div class="a" style="left:236px;top:730px;width:1px;height:13px;background:#8c8c8c;"></div>
<div class="a" style="left:237px;top:731px;width:11px;height:1px;background:#000;"></div>
<div class="a" style="left:237px;top:731px;width:1px;height:11px;background:#000;"></div>
<div class="a" style="left:238px;top:732px;width:9px;height:9px;background:#ffffff;"></div>
<div class="a" style="left:237px;top:741px;width:11px;height:1px;background:#d4d4d4;"></div>
<div class="a" style="left:247px;top:731px;width:1px;height:11px;background:#d4d4d4;"></div>
<div class="a" style="left:236px;top:742px;width:13px;height:1px;background:#ffffff;"></div>
<div class="a" style="left:248px;top:730px;width:1px;height:13px;background:#ffffff;"></div>
<div class="t" style="left:64px;top:754.60px;font-size:12.6px;color:#000;">Line-width scale:</div>
<div class="a" style="left:182px;top:749px;width:36px;height:20px;background:#ffffff;"></div>
<div class="a" style="left:182px;top:749px;width:36px;height:1px;background:#8c8c8c;"></div>
<div class="a" style="left:182px;top:749px;width:1px;height:20px;background:#8c8c8c;"></div>
<div class="t" style="right:923.5px;top:751.60px;font-size:12.6px;color:#000">1.0</div>
<div class="a" style="left:218px;top:749px;width:14px;height:20px;background:#e6e6e6;"></div>
<div class="a" style="left:218px;top:758px;width:14px;height:1px;background:#8c8c8c;"></div>
<div class="a" style="left:231px;top:749px;width:1px;height:20px;background:#8c8c8c;"></div>
<div class="a" style="left:218px;top:769px;width:14px;height:1px;background:#8c8c8c;"></div>
<svg class="a" style="left:221px;top:752px" width="7" height="4"><polygon points="3.5,0 7,4 0,4" fill="#000"/></svg>
<svg class="a" style="left:221px;top:762px" width="7" height="4"><polygon points="0,0 7,0 3.5,4" fill="#000"/></svg>
<div class="a" style="left:236px;top:752px;width:13px;height:1px;background:#8c8c8c;"></div>
<div class="a" style="left:236px;top:752px;width:1px;height:13px;background:#8c8c8c;"></div>
<div class="a" style="left:237px;top:753px;width:11px;height:1px;background:#000;"></div>
<div class="a" style="left:237px;top:753px;width:1px;height:11px;background:#000;"></div>
<div class="a" style="left:238px;top:754px;width:9px;height:9px;background:#ffffff;"></div>
<div class="a" style="left:237px;top:763px;width:11px;height:1px;background:#d4d4d4;"></div>
<div class="a" style="left:247px;top:753px;width:1px;height:11px;background:#d4d4d4;"></div>
<div class="a" style="left:236px;top:764px;width:13px;height:1px;background:#ffffff;"></div>
<div class="a" style="left:248px;top:752px;width:1px;height:13px;background:#ffffff;"></div>
<div class="a" style="left:60px;top:770px;width:226px;height:12px;overflow:hidden">
<div class="t" style="left:4px;top:7.10px;font-size:12.6px;color:#000;">Wireframe line width:</div>
</div>
<div class="a" style="left:182px;top:771px;width:36px;height:11px;background:#ffffff;"></div>
<div class="a" style="left:182px;top:771px;width:36px;height:1px;background:#8c8c8c;"></div>
<div class="a" style="left:182px;top:771px;width:1px;height:11px;background:#8c8c8c;"></div>
<div class="a" style="left:218px;top:771px;width:14px;height:11px;background:#e6e6e6;"></div>
<div class="a" style="left:231px;top:771px;width:1px;height:11px;background:#8c8c8c;"></div>
<svg class="a" style="left:221px;top:774px" width="7" height="4"><polygon points="3.5,0 7,4 0,4" fill="#000"/></svg>
<div class="a" style="left:182px;top:772px;width:36px;height:10px;overflow:hidden">
<div class="t" style="right:5.5px;top:1.60px;font-size:12.6px">1.0</div>
</div>
<svg class="a" style="left:291px;top:772px" width="7" height="4"><polygon points="0,0 7,0 3.5,4" fill="#000"/></svg>
<svg class="a" style="left:291px;top:404px" width="7" height="4"><polygon points="3.5,0 7,4 0,4" fill="#000"/></svg>
<div class="a" style="left:287px;top:414px;width:16px;height:1px;background:#8c8c8c;"></div>
<div class="a" style="left:287px;top:414px;width:1px;height:267px;background:#8c8c8c;"></div>
<div class="a" style="left:302px;top:414px;width:1px;height:267px;background:#8c8c8c;"></div>
<div class="a" style="left:287px;top:680px;width:16px;height:1px;background:#8c8c8c;"></div>
<div class="a" style="left:288px;top:415px;width:14px;height:1px;background:#f4f4f4;"></div>
<div class="a" style="left:288px;top:415px;width:1px;height:265px;background:#f4f4f4;"></div>
<div class="a" style="left:291px;top:545px;width:8px;height:1px;background:#8c8c8c;"></div>
<div class="a" style="left:291px;top:548px;width:8px;height:1px;background:#8c8c8c;"></div>
<div class="a" style="left:291px;top:551px;width:8px;height:1px;background:#8c8c8c;"></div>
<div class="a" style="left:61px;top:782px;width:226px;height:1px;background:#e6e6e6;"></div>
<svg class="a" style="left:65px;top:786px" width="4" height="7"><polygon points="4,0 4,7 0,3.5" fill="#000"/></svg>
<div class="a" style="left:76px;top:782px;width:194px;height:1px;background:#8c8c8c;"></div>
<div class="a" style="left:76px;top:796px;width:194px;height:1px;background:#8c8c8c;"></div>
<div class="a" style="left:76px;top:782px;width:1px;height:15px;background:#8c8c8c;"></div>
<div class="a" style="left:269px;top:782px;width:1px;height:15px;background:#8c8c8c;"></div>
<div class="a" style="left:77px;top:783px;width:192px;height:1px;background:#f4f4f4;"></div>
<div class="a" style="left:77px;top:783px;width:1px;height:13px;background:#f4f4f4;"></div>
<div class="a" style="left:170px;top:786px;width:1px;height:8px;background:#8c8c8c;"></div>
<div class="a" style="left:173px;top:786px;width:1px;height:8px;background:#8c8c8c;"></div>
<div class="a" style="left:176px;top:786px;width:1px;height:8px;background:#8c8c8c;"></div>
<svg class="a" style="left:277px;top:786px" width="4" height="7"><polygon points="0,0 4,3.5 0,7" fill="#000"/></svg>
<div class="a" style="left:305px;top:398px;width:1px;height:403px;background:#8c8c8c;"></div>
<div class="a" style="left:58px;top:800px;width:248px;height:1px;background:#8c8c8c;"></div>
<div class="a" style="left:58px;top:398px;width:1px;height:403px;background:#ffffff;"></div>
<svg class="a" style="left:308px;top:388px" width="4" height="7" shape-rendering="crispEdges"><path d="M0 0h1v1h-1zM0 1h1v1h-1zM1 1h1v1h-1zM1 2h1v1h-1zM2 2h1v1h-1zM2 3h1v1h-1zM3 3h1v1h-1zM2 4h1v1h-1zM1 4h1v1h-1zM1 5h1v1h-1zM0 5h1v1h-1zM0 6h1v1h-1z" fill="#000"/></svg>
<svg class="a" style="left:308px;top:488px" width="4" height="7" shape-rendering="crispEdges"><path d="M0 0h1v1h-1zM0 1h1v1h-1zM1 1h1v1h-1zM1 2h1v1h-1zM2 2h1v1h-1zM2 3h1v1h-1zM3 3h1v1h-1zM2 4h1v1h-1zM1 4h1v1h-1zM1 5h1v1h-1zM0 5h1v1h-1zM0 6h1v1h-1z" fill="#000"/></svg>
<div class="a" style="left:310px;top:397px;width:1px;height:90px;background:repeating-linear-gradient(180deg,#6e6e6e 0 1px,transparent 1px 3px)"></div>
<div class="a" style="left:316px;top:81px;width:61px;height:1px;background:#ffffff;"></div>
<div class="a" style="left:314px;top:83px;width:1px;height:19px;background:#ffffff;"></div>
<div class="a" style="left:315px;top:82px;width:1px;height:1px;background:#ffffff;"></div>
<div class="a" style="left:377px;top:82px;width:1px;height:19px;background:#8c8c8c;"></div>
<div class="t" style="left:320.5px;top:83.60px;font-size:12.6px;color:#000;">Viewer 1</div>
<div class="a" style="left:378px;top:101px;width:700px;height:1px;background:#ffffff;"></div>
<div class="a" style="left:314px;top:101px;width:1px;height:596px;background:#ffffff;"></div>
<div class="a" style="left:1077px;top:101px;width:1px;height:596px;background:#8c8c8c;"></div>
<div class="a" style="left:1077px;top:725px;width:1px;height:76px;background:#8c8c8c;"></div>
<div class="a" style="left:314px;top:800px;width:764px;height:1px;background:#8c8c8c;"></div>
<div class="a" style="left:316px;top:103px;width:34px;height:1px;background:#ffffff;"></div>
<div class="a" style="left:316px;top:103px;width:1px;height:21px;background:#ffffff;"></div>
<div class="a" style="left:316px;top:123px;width:34px;height:1px;background:#8c8c8c;"></div>
<div class="a" style="left:349px;top:103px;width:1px;height:21px;background:#8c8c8c;"></div>
<div class="t" style="left:320.5px;top:105.60px;font-size:12.6px;color:#000;">Hide</div>
<div class="a" style="left:350px;top:103px;width:676px;height:1px;background:#ffffff;"></div>
<div class="a" style="left:350px;top:103px;width:1px;height:21px;background:#ffffff;"></div>
<div class="a" style="left:350px;top:123px;width:676px;height:1px;background:#8c8c8c;"></div>
<div class="a" style="left:1025px;top:103px;width:1px;height:21px;background:#8c8c8c;"></div>
<div class="t" style="left:387.0px;width:600px;text-align:center;top:105.60px;font-size:12.6px;color:#000;letter-spacing:0px">Viewer 1</div>
<div class="a" style="left:1026px;top:103px;width:50px;height:1px;background:#ffffff;"></div>
<div class="a" style="left:1026px;top:103px;width:1px;height:21px;background:#ffffff;"></div>
<div class="a" style="left:1026px;top:123px;width:50px;height:1px;background:#8c8c8c;"></div>
<div class="a" style="left:1075px;top:103px;width:1px;height:21px;background:#8c8c8c;"></div>
<div class="t" style="left:1030.0px;top:105.60px;font-size:12.6px;color:#000;letter-spacing:0.25px">Actions</div>
<div class="a" style="left:316px;top:125px;width:760px;height:1px;background:#ffffff;"></div>
<div class="a" style="left:316px;top:126px;width:760px;height:2px;background:#7b9ec4;"></div>
<div class="a" style="left:316px;top:125px;width:1px;height:3px;background:#ffffff;"></div>
<div class="a" style="left:316px;top:128px;width:760px;height:1px;background:#8c8c8c;"></div>
<div class="a" style="left:316px;top:130px;width:760px;height:565px;background:#000;"></div>
<div class="a" style="left:316px;top:695px;width:761px;height:1px;background:#ffffff;"></div>
<div class="a" style="left:1076px;top:130px;width:1px;height:566px;background:#ffffff;"></div>
<div class="a" style="left:314px;top:696px;width:764px;height:1px;background:#8c8c8c;"></div>
<svg class="a" style="left:678px;top:156px" width="36" height="504" shape-rendering="crispEdges"><rect x="0" y="0" width="36" height="504" fill="#00007e"/><rect x="0" y="23" width="36" height="19" fill="#00008e"/><rect x="4" y="17" width="3" height="6" fill="#000094"/><rect x="4" y="42" width="3" height="6" fill="#1010e8"/><rect x="4" y="43" width="3" height="1" fill="#4848ff"/><rect x="11" y="17" width="3" height="6" fill="#000094"/><rect x="11" y="42" width="3" height="6" fill="#1010e8"/><rect x="11" y="43" width="3" height="1" fill="#4848ff"/><rect x="18" y="17" width="4" height="6" fill="#000094"/><rect x="18" y="42" width="4" height="6" fill="#1010e8"/><rect x="18" y="43" width="4" height="1" fill="#4848ff"/><rect x="25" y="17" width="3" height="6" fill="#000094"/><rect x="25" y="42" width="3" height="6" fill="#1010e8"/><rect x="25" y="43" width="3" height="1" fill="#4848ff"/><rect x="32" y="17" width="3" height="6" fill="#000094"/><rect x="32" y="42" width="3" height="6" fill="#1010e8"/><rect x="32" y="43" width="3" height="1" fill="#4848ff"/><rect x="0" y="23" width="4" height="1" fill="#1515c8"/><rect x="7" y="23" width="4" height="1" fill="#1515c8"/><rect x="14" y="23" width="4" height="1" fill="#1515c8"/><rect x="22" y="23" width="3" height="1" fill="#1515c8"/><rect x="29" y="23" width="3" height="1" fill="#1515c8"/><rect x="0" y="48" width="36" height="2" fill="#0c0cd0"/><rect x="0" y="1" width="4" height="4" fill="#1010e8"/><rect x="0" y="1" width="4" height="1" fill="#4848ff"/><rect x="7" y="1" width="4" height="4" fill="#1010e8"/><rect x="7" y="1" width="4" height="1" fill="#4848ff"/><rect x="14" y="1" width="4" height="4" fill="#1010e8"/><rect x="14" y="1" width="4" height="1" fill="#4848ff"/><rect x="22" y="1" width="3" height="4" fill="#1010e8"/><rect x="22" y="1" width="3" height="1" fill="#4848ff"/><rect x="29" y="1" width="3" height="4" fill="#1010e8"/><rect x="29" y="1" width="3" height="1" fill="#4848ff"/><rect x="0" y="72" width="36" height="19" fill="#00008e"/><rect x="4" y="66" width="3" height="6" fill="#000094"/><rect x="4" y="91" width="3" height="6" fill="#1010e8"/><rect x="4" y="92" width="3" height="1" fill="#4848ff"/><rect x="11" y="66" width="3" height="6" fill="#000094"/><rect x="11" y="91" width="3" height="6" fill="#1010e8"/><rect x="11" y="92" width="3" height="1" fill="#4848ff"/><rect x="18" y="66" width="4" height="6" fill="#000094"/><rect x="18" y="91" width="4" height="6" fill="#1010e8"/><rect x="18" y="92" width="4" height="1" fill="#4848ff"/><rect x="25" y="66" width="3" height="6" fill="#000094"/><rect x="25" y="91" width="3" height="6" fill="#1010e8"/><rect x="25" y="92" width="3" height="1" fill="#4848ff"/><rect x="32" y="66" width="3" height="6" fill="#000094"/><rect x="32" y="91" width="3" height="6" fill="#1010e8"/><rect x="32" y="92" width="3" height="1" fill="#4848ff"/><rect x="0" y="72" width="4" height="1" fill="#1515c8"/><rect x="7" y="72" width="4" height="1" fill="#1515c8"/><rect x="14" y="72" width="4" height="1" fill="#1515c8"/><rect x="22" y="72" width="3" height="1" fill="#1515c8"/><rect x="29" y="72" width="3" height="1" fill="#1515c8"/><rect x="0" y="97" width="36" height="2" fill="#0c0cd0"/><rect x="0" y="50" width="4" height="4" fill="#1010e8"/><rect x="0" y="50" width="4" height="1" fill="#4848ff"/><rect x="7" y="50" width="4" height="4" fill="#1010e8"/><rect x="7" y="50" width="4" height="1" fill="#4848ff"/><rect x="14" y="50" width="4" height="4" fill="#1010e8"/><rect x="14" y="50" width="4" height="1" fill="#4848ff"/><rect x="22" y="50" width="3" height="4" fill="#1010e8"/><rect x="22" y="50" width="3" height="1" fill="#4848ff"/><rect x="29" y="50" width="3" height="4" fill="#1010e8"/><rect x="29" y="50" width="3" height="1" fill="#4848ff"/><rect x="0" y="121" width="36" height="19" fill="#00008e"/><rect x="4" y="115" width="3" height="6" fill="#000094"/><rect x="4" y="140" width="3" height="6" fill="#0a0ab0"/><rect x="4" y="141" width="3" height="1" fill="#a0a0ee"/><rect x="11" y="115" width="3" height="6" fill="#000094"/><rect x="11" y="140" width="3" height="6" fill="#0a0ab0"/><rect x="11" y="141" width="3" height="1" fill="#a0a0ee"/><rect x="18" y="115" width="4" height="6" fill="#000094"/><rect x="18" y="140" width="4" height="6" fill="#0a0ab0"/><rect x="18" y="141" width="4" height="1" fill="#a0a0ee"/><rect x="25" y="115" width="3" height="6" fill="#000094"/><rect x="25" y="140" width="3" height="6" fill="#0a0ab0"/><rect x="25" y="141" width="3" height="1" fill="#a0a0ee"/><rect x="32" y="115" width="3" height="6" fill="#000094"/><rect x="32" y="140" width="3" height="6" fill="#0a0ab0"/><rect x="32" y="141" width="3" height="1" fill="#a0a0ee"/><rect x="0" y="121" width="4" height="1" fill="#1515c8"/><rect x="7" y="121" width="4" height="1" fill="#1515c8"/><rect x="14" y="121" width="4" height="1" fill="#1515c8"/><rect x="22" y="121" width="3" height="1" fill="#1515c8"/><rect x="29" y="121" width="3" height="1" fill="#1515c8"/><rect x="0" y="146" width="36" height="2" fill="#0808a0"/><rect x="0" y="99" width="4" height="4" fill="#1010e8"/><rect x="0" y="99" width="4" height="1" fill="#4848ff"/><rect x="7" y="99" width="4" height="4" fill="#1010e8"/><rect x="7" y="99" width="4" height="1" fill="#4848ff"/><rect x="14" y="99" width="4" height="4" fill="#1010e8"/><rect x="14" y="99" width="4" height="1" fill="#4848ff"/><rect x="22" y="99" width="3" height="4" fill="#1010e8"/><rect x="22" y="99" width="3" height="1" fill="#4848ff"/><rect x="29" y="99" width="3" height="4" fill="#1010e8"/><rect x="29" y="99" width="3" height="1" fill="#4848ff"/><rect x="0" y="171" width="36" height="19" fill="#00008e"/><rect x="4" y="165" width="3" height="6" fill="#000094"/><rect x="4" y="190" width="3" height="6" fill="#0a0ab0"/><rect x="4" y="191" width="3" height="1" fill="#a0a0ee"/><rect x="11" y="165" width="3" height="6" fill="#000094"/><rect x="11" y="190" width="3" height="6" fill="#0a0ab0"/><rect x="11" y="191" width="3" height="1" fill="#a0a0ee"/><rect x="18" y="165" width="4" height="6" fill="#000094"/><rect x="18" y="190" width="4" height="6" fill="#0a0ab0"/><rect x="18" y="191" width="4" height="1" fill="#a0a0ee"/><rect x="25" y="165" width="3" height="6" fill="#000094"/><rect x="25" y="190" width="3" height="6" fill="#0a0ab0"/><rect x="25" y="191" width="3" height="1" fill="#a0a0ee"/><rect x="32" y="165" width="3" height="6" fill="#000094"/><rect x="32" y="190" width="3" height="6" fill="#0a0ab0"/><rect x="32" y="191" width="3" height="1" fill="#a0a0ee"/><rect x="0" y="171" width="4" height="1" fill="#1515c8"/><rect x="7" y="171" width="4" height="1" fill="#1515c8"/><rect x="14" y="171" width="4" height="1" fill="#1515c8"/><rect x="22" y="171" width="3" height="1" fill="#1515c8"/><rect x="29" y="171" width="3" height="1" fill="#1515c8"/><rect x="0" y="196" width="36" height="2" fill="#0808a0"/><rect x="0" y="149" width="4" height="4" fill="#0a0ab0"/><rect x="0" y="149" width="4" height="1" fill="#a0a0ee"/><rect x="7" y="149" width="4" height="4" fill="#0a0ab0"/><rect x="7" y="149" width="4" height="1" fill="#a0a0ee"/><rect x="14" y="149" width="4" height="4" fill="#0a0ab0"/><rect x="14" y="149" width="4" height="1" fill="#a0a0ee"/><rect x="22" y="149" width="3" height="4" fill="#0a0ab0"/><rect x="22" y="149" width="3" height="1" fill="#a0a0ee"/><rect x="29" y="149" width="3" height="4" fill="#0a0ab0"/><rect x="29" y="149" width="3" height="1" fill="#a0a0ee"/><rect x="0" y="220" width="36" height="19" fill="#00008e"/><rect x="4" y="214" width="3" height="6" fill="#000094"/><rect x="4" y="239" width="3" height="6" fill="#0a0ab0"/><rect x="4" y="240" width="3" height="1" fill="#a0a0ee"/><rect x="11" y="214" width="3" height="6" fill="#000094"/><rect x="11" y="239" width="3" height="6" fill="#0a0ab0"/><rect x="11" y="240" width="3" height="1" fill="#a0a0ee"/><rect x="18" y="214" width="4" height="6" fill="#000094"/><rect x="18" y="239" width="4" height="6" fill="#0a0ab0"/><rect x="18" y="240" width="4" height="1" fill="#a0a0ee"/><rect x="25" y="214" width="3" height="6" fill="#000094"/><rect x="25" y="239" width="3" height="6" fill="#0a0ab0"/><rect x="25" y="240" width="3" height="1" fill="#a0a0ee"/><rect x="32" y="214" width="3" height="6" fill="#000094"/><rect x="32" y="239" width="3" height="6" fill="#0a0ab0"/><rect x="32" y="240" width="3" height="1" fill="#a0a0ee"/><rect x="0" y="220" width="4" height="1" fill="#1515c8"/><rect x="7" y="220" width="4" height="1" fill="#1515c8"/><rect x="14" y="220" width="4" height="1" fill="#1515c8"/><rect x="22" y="220" width="3" height="1" fill="#1515c8"/><rect x="29" y="220" width="3" height="1" fill="#1515c8"/><rect x="0" y="245" width="36" height="2" fill="#0808a0"/><rect x="0" y="198" width="4" height="4" fill="#0a0ab0"/><rect x="0" y="198" width="4" height="1" fill="#a0a0ee"/><rect x="7" y="198" width="4" height="4" fill="#0a0ab0"/><rect x="7" y="198" width="4" height="1" fill="#a0a0ee"/><rect x="14" y="198" width="4" height="4" fill="#0a0ab0"/><rect x="14" y="198" width="4" height="1" fill="#a0a0ee"/><rect x="22" y="198" width="3" height="4" fill="#0a0ab0"/><rect x="22" y="198" width="3" height="1" fill="#a0a0ee"/><rect x="29" y="198" width="3" height="4" fill="#0a0ab0"/><rect x="29" y="198" width="3" height="1" fill="#a0a0ee"/><rect x="0" y="269" width="36" height="19" fill="#00008e"/><rect x="4" y="263" width="3" height="6" fill="#000094"/><rect x="4" y="288" width="3" height="6" fill="#1010e8"/><rect x="4" y="289" width="3" height="1" fill="#4848ff"/><rect x="11" y="263" width="3" height="6" fill="#000094"/><rect x="11" y="288" width="3" height="6" fill="#1010e8"/><rect x="11" y="289" width="3" height="1" fill="#4848ff"/><rect x="18" y="263" width="4" height="6" fill="#000094"/><rect x="18" y="288" width="4" height="6" fill="#1010e8"/><rect x="18" y="289" width="4" height="1" fill="#4848ff"/><rect x="25" y="263" width="3" height="6" fill="#000094"/><rect x="25" y="288" width="3" height="6" fill="#1010e8"/><rect x="25" y="289" width="3" height="1" fill="#4848ff"/><rect x="32" y="263" width="3" height="6" fill="#000094"/><rect x="32" y="288" width="3" height="6" fill="#1010e8"/><rect x="32" y="289" width="3" height="1" fill="#4848ff"/><rect x="0" y="269" width="4" height="1" fill="#1515c8"/><rect x="7" y="269" width="4" height="1" fill="#1515c8"/><rect x="14" y="269" width="4" height="1" fill="#1515c8"/><rect x="22" y="269" width="3" height="1" fill="#1515c8"/><rect x="29" y="269" width="3" height="1" fill="#1515c8"/><rect x="0" y="294" width="36" height="2" fill="#0808a0"/><rect x="0" y="247" width="4" height="4" fill="#0a0ab0"/><rect x="0" y="247" width="4" height="1" fill="#a0a0ee"/><rect x="7" y="247" width="4" height="4" fill="#0a0ab0"/><rect x="7" y="247" width="4" height="1" fill="#a0a0ee"/><rect x="14" y="247" width="4" height="4" fill="#0a0ab0"/><rect x="14" y="247" width="4" height="1" fill="#a0a0ee"/><rect x="22" y="247" width="3" height="4" fill="#0a0ab0"/><rect x="22" y="247" width="3" height="1" fill="#a0a0ee"/><rect x="29" y="247" width="3" height="4" fill="#0a0ab0"/><rect x="29" y="247" width="3" height="1" fill="#a0a0ee"/><rect x="0" y="318" width="36" height="19" fill="#00008e"/><rect x="4" y="312" width="3" height="6" fill="#000094"/><rect x="4" y="337" width="3" height="6" fill="#0a0ab0"/><rect x="4" y="338" width="3" height="1" fill="#a0a0ee"/><rect x="11" y="312" width="3" height="6" fill="#000094"/><rect x="11" y="337" width="3" height="6" fill="#0a0ab0"/><rect x="11" y="338" width="3" height="1" fill="#a0a0ee"/><rect x="18" y="312" width="4" height="6" fill="#000094"/><rect x="18" y="337" width="4" height="6" fill="#0a0ab0"/><rect x="18" y="338" width="4" height="1" fill="#a0a0ee"/><rect x="25" y="312" width="3" height="6" fill="#000094"/><rect x="25" y="337" width="3" height="6" fill="#0a0ab0"/><rect x="25" y="338" width="3" height="1" fill="#a0a0ee"/><rect x="32" y="312" width="3" height="6" fill="#000094"/><rect x="32" y="337" width="3" height="6" fill="#0a0ab0"/><rect x="32" y="338" width="3" height="1" fill="#a0a0ee"/><rect x="0" y="318" width="4" height="1" fill="#1515c8"/><rect x="7" y="318" width="4" height="1" fill="#1515c8"/><rect x="14" y="318" width="4" height="1" fill="#1515c8"/><rect x="22" y="318" width="3" height="1" fill="#1515c8"/><rect x="29" y="318" width="3" height="1" fill="#1515c8"/><rect x="0" y="343" width="36" height="2" fill="#0808a0"/><rect x="0" y="296" width="4" height="4" fill="#1010e8"/><rect x="0" y="296" width="4" height="1" fill="#4848ff"/><rect x="7" y="296" width="4" height="4" fill="#1010e8"/><rect x="7" y="296" width="4" height="1" fill="#4848ff"/><rect x="14" y="296" width="4" height="4" fill="#1010e8"/><rect x="14" y="296" width="4" height="1" fill="#4848ff"/><rect x="22" y="296" width="3" height="4" fill="#1010e8"/><rect x="22" y="296" width="3" height="1" fill="#4848ff"/><rect x="29" y="296" width="3" height="4" fill="#1010e8"/><rect x="29" y="296" width="3" height="1" fill="#4848ff"/><rect x="0" y="367" width="36" height="19" fill="#00008e"/><rect x="4" y="361" width="3" height="6" fill="#000094"/><rect x="4" y="386" width="3" height="6" fill="#0a0ab0"/><rect x="4" y="387" width="3" height="1" fill="#a0a0ee"/><rect x="11" y="361" width="3" height="6" fill="#000094"/><rect x="11" y="386" width="3" height="6" fill="#0a0ab0"/><rect x="11" y="387" width="3" height="1" fill="#a0a0ee"/><rect x="18" y="361" width="4" height="6" fill="#000094"/><rect x="18" y="386" width="4" height="6" fill="#0a0ab0"/><rect x="18" y="387" width="4" height="1" fill="#a0a0ee"/><rect x="25" y="361" width="3" height="6" fill="#000094"/><rect x="25" y="386" width="3" height="6" fill="#0a0ab0"/><rect x="25" y="387" width="3" height="1" fill="#a0a0ee"/><rect x="32" y="361" width="3" height="6" fill="#000094"/><rect x="32" y="386" width="3" height="6" fill="#0a0ab0"/><rect x="32" y="387" width="3" height="1" fill="#a0a0ee"/><rect x="0" y="367" width="4" height="1" fill="#1515c8"/><rect x="7" y="367" width="4" height="1" fill="#1515c8"/><rect x="14" y="367" width="4" height="1" fill="#1515c8"/><rect x="22" y="367" width="3" height="1" fill="#1515c8"/><rect x="29" y="367" width="3" height="1" fill="#1515c8"/><rect x="0" y="392" width="36" height="2" fill="#0808a0"/><rect x="0" y="345" width="4" height="4" fill="#0a0ab0"/><rect x="0" y="345" width="4" height="1" fill="#a0a0ee"/><rect x="7" y="345" width="4" height="4" fill="#0a0ab0"/><rect x="7" y="345" width="4" height="1" fill="#a0a0ee"/><rect x="14" y="345" width="4" height="4" fill="#0a0ab0"/><rect x="14" y="345" width="4" height="1" fill="#a0a0ee"/><rect x="22" y="345" width="3" height="4" fill="#0a0ab0"/><rect x="22" y="345" width="3" height="1" fill="#a0a0ee"/><rect x="29" y="345" width="3" height="4" fill="#0a0ab0"/><rect x="29" y="345" width="3" height="1" fill="#a0a0ee"/><rect x="0" y="417" width="36" height="19" fill="#00008e"/><rect x="4" y="411" width="3" height="6" fill="#000094"/><rect x="4" y="436" width="3" height="6" fill="#0a0ab0"/><rect x="4" y="437" width="3" height="1" fill="#a0a0ee"/><rect x="11" y="411" width="3" height="6" fill="#000094"/><rect x="11" y="436" width="3" height="6" fill="#0a0ab0"/><rect x="11" y="437" width="3" height="1" fill="#a0a0ee"/><rect x="18" y="411" width="4" height="6" fill="#000094"/><rect x="18" y="436" width="4" height="6" fill="#0a0ab0"/><rect x="18" y="437" width="4" height="1" fill="#a0a0ee"/><rect x="25" y="411" width="3" height="6" fill="#000094"/><rect x="25" y="436" width="3" height="6" fill="#0a0ab0"/><rect x="25" y="437" width="3" height="1" fill="#a0a0ee"/><rect x="32" y="411" width="3" height="6" fill="#000094"/><rect x="32" y="436" width="3" height="6" fill="#0a0ab0"/><rect x="32" y="437" width="3" height="1" fill="#a0a0ee"/><rect x="0" y="417" width="4" height="1" fill="#1515c8"/><rect x="7" y="417" width="4" height="1" fill="#1515c8"/><rect x="14" y="417" width="4" height="1" fill="#1515c8"/><rect x="22" y="417" width="3" height="1" fill="#1515c8"/><rect x="29" y="417" width="3" height="1" fill="#1515c8"/><rect x="0" y="442" width="36" height="2" fill="#0808a0"/><rect x="0" y="395" width="4" height="4" fill="#0a0ab0"/><rect x="0" y="395" width="4" height="1" fill="#a0a0ee"/><rect x="7" y="395" width="4" height="4" fill="#0a0ab0"/><rect x="7" y="395" width="4" height="1" fill="#a0a0ee"/><rect x="14" y="395" width="4" height="4" fill="#0a0ab0"/><rect x="14" y="395" width="4" height="1" fill="#a0a0ee"/><rect x="22" y="395" width="3" height="4" fill="#0a0ab0"/><rect x="22" y="395" width="3" height="1" fill="#a0a0ee"/><rect x="29" y="395" width="3" height="4" fill="#0a0ab0"/><rect x="29" y="395" width="3" height="1" fill="#a0a0ee"/><rect x="0" y="466" width="36" height="19" fill="#00008e"/><rect x="4" y="460" width="3" height="6" fill="#000094"/><rect x="4" y="485" width="3" height="6" fill="#0a0ab0"/><rect x="4" y="486" width="3" height="1" fill="#a0a0ee"/><rect x="11" y="460" width="3" height="6" fill="#000094"/><rect x="11" y="485" width="3" height="6" fill="#0a0ab0"/><rect x="11" y="486" width="3" height="1" fill="#a0a0ee"/><rect x="18" y="460" width="4" height="6" fill="#000094"/><rect x="18" y="485" width="4" height="6" fill="#0a0ab0"/><rect x="18" y="486" width="4" height="1" fill="#a0a0ee"/><rect x="25" y="460" width="3" height="6" fill="#000094"/><rect x="25" y="485" width="3" height="6" fill="#0a0ab0"/><rect x="25" y="486" width="3" height="1" fill="#a0a0ee"/><rect x="32" y="460" width="3" height="6" fill="#000094"/><rect x="32" y="485" width="3" height="6" fill="#0a0ab0"/><rect x="32" y="486" width="3" height="1" fill="#a0a0ee"/><rect x="0" y="466" width="4" height="1" fill="#1515c8"/><rect x="7" y="466" width="4" height="1" fill="#1515c8"/><rect x="14" y="466" width="4" height="1" fill="#1515c8"/><rect x="22" y="466" width="3" height="1" fill="#1515c8"/><rect x="29" y="466" width="3" height="1" fill="#1515c8"/><rect x="0" y="491" width="36" height="2" fill="#0808a0"/><rect x="0" y="444" width="4" height="4" fill="#0a0ab0"/><rect x="0" y="444" width="4" height="1" fill="#a0a0ee"/><rect x="7" y="444" width="4" height="4" fill="#0a0ab0"/><rect x="7" y="444" width="4" height="1" fill="#a0a0ee"/><rect x="14" y="444" width="4" height="4" fill="#0a0ab0"/><rect x="14" y="444" width="4" height="1" fill="#a0a0ee"/><rect x="22" y="444" width="3" height="4" fill="#0a0ab0"/><rect x="22" y="444" width="3" height="1" fill="#a0a0ee"/><rect x="29" y="444" width="3" height="4" fill="#0a0ab0"/><rect x="29" y="444" width="3" height="1" fill="#a0a0ee"/><rect x="0" y="493" width="4" height="4" fill="#1010e8"/><rect x="0" y="493" width="4" height="1" fill="#a0a0ee"/><rect x="7" y="493" width="4" height="4" fill="#1010e8"/><rect x="7" y="493" width="4" height="1" fill="#a0a0ee"/><rect x="14" y="493" width="4" height="4" fill="#1010e8"/><rect x="14" y="493" width="4" height="1" fill="#a0a0ee"/><rect x="22" y="493" width="3" height="4" fill="#1010e8"/><rect x="22" y="493" width="3" height="1" fill="#a0a0ee"/><rect x="29" y="493" width="3" height="4" fill="#1010e8"/><rect x="29" y="493" width="3" height="1" fill="#a0a0ee"/></svg>
<svg class="a" style="left:643px;top:699px" width="7" height="4" shape-rendering="crispEdges"><path d="M0 0h1v1h-1zM1 0h1v1h-1zM1 1h1v1h-1zM2 1h1v1h-1zM2 2h1v1h-1zM3 2h1v1h-1zM3 3h1v1h-1zM4 2h1v1h-1zM4 1h1v1h-1zM5 1h1v1h-1zM5 0h1v1h-1zM6 0h1v1h-1z" fill="#000"/></svg>
<svg class="a" style="left:743px;top:699px" width="7" height="4" shape-rendering="crispEdges"><path d="M0 0h1v1h-1zM1 0h1v1h-1zM1 1h1v1h-1zM2 1h1v1h-1zM2 2h1v1h-1zM3 2h1v1h-1zM3 3h1v1h-1zM4 2h1v1h-1zM4 1h1v1h-1zM5 1h1v1h-1zM5 0h1v1h-1zM6 0h1v1h-1z" fill="#000"/></svg>
<div class="a" style="left:653px;top:701px;width:88px;height:1px;background:repeating-linear-gradient(90deg,#6e6e6e 0 1px,transparent 1px 3px)"></div>
<div class="a" style="left:316px;top:705px;width:68px;height:1px;background:#ffffff;"></div>
<div class="a" style="left:314px;top:707px;width:1px;height:19px;background:#ffffff;"></div>
<div class="a" style="left:315px;top:706px;width:1px;height:1px;background:#ffffff;"></div>
<div class="a" style="left:384px;top:706px;width:1px;height:19px;background:#8c8c8c;"></div>
<div class="t" style="left:320.5px;top:707.60px;font-size:12.6px;color:#000;">Command</div>
<div class="a" style="left:385px;top:725px;width:692px;height:1px;background:#ffffff;"></div>
<div class="a" style="left:314px;top:725px;width:1px;height:75px;background:#ffffff;"></div>
<div class="t" style="left:324.5px;top:733.60px;font-size:12.6px;color:#000;">Command (local):</div>
<div class="a" style="left:433px;top:731px;width:635px;height:21px;background:#ffffff;"></div>
<div class="a" style="left:433px;top:731px;width:635px;height:1px;background:#8c8c8c;"></div>
<div class="a" style="left:433px;top:731px;width:1px;height:21px;background:#8c8c8c;"></div>
<div class="a" style="left:1051px;top:732px;width:16px;height:18px;background:#e6e6e6;"></div>
<div class="a" style="left:1051px;top:732px;width:16px;height:1px;background:#8c8c8c;"></div>
<div class="a" style="left:1051px;top:732px;width:1px;height:18px;background:#8c8c8c;"></div>
<div class="a" style="left:1051px;top:749px;width:16px;height:1px;background:#8c8c8c;"></div>
<div class="a" style="left:1066px;top:732px;width:1px;height:18px;background:#8c8c8c;"></div>
<svg class="a" style="left:1055px;top:739px" width="7" height="4"><polygon points="0,0 7,0 3.5,4" fill="#000"/></svg>
<div class="a" style="left:319px;top:759px;width:754px;height:37px;background:#ffffff;"></div>
<div class="a" style="left:319px;top:759px;width:754px;height:1px;background:#8c8c8c;"></div>
<div class="a" style="left:319px;top:759px;width:1px;height:37px;background:#8c8c8c;"></div>
<div class="a" style="left:320px;top:760px;width:752px;height:1px;background:#e6e6e6;"></div>
<div class="a" style="left:320px;top:760px;width:1px;height:35px;background:#e6e6e6;"></div>
<div class="a" style="left:320px;top:794px;width:752px;height:1px;background:#e2e2e2;"></div>
<div class="a" style="left:1071px;top:760px;width:1px;height:35px;background:#e2e2e2;"></div>
<div class="a" style="left:56px;top:801px;width:1024px;height:1px;background:#ffffff;"></div>
<div class="a" style="left:56px;top:803px;width:335px;height:1px;background:#8c8c8c;"></div>
<div class="a" style="left:390px;top:803px;width:1px;height:19px;background:#ffffff;"></div>
<div class="a" style="left:56px;top:821px;width:335px;height:1px;background:#ffffff;"></div>
<div class="a" style="left:393px;top:803px;width:100px;height:1px;background:#8c8c8c;"></div>
<div class="a" style="left:393px;top:803px;width:1px;height:18px;background:#8c8c8c;"></div>
<div class="a" style="left:492px;top:803px;width:1px;height:19px;background:#ffffff;"></div>
<div class="a" style="left:393px;top:821px;width:100px;height:1px;background:#ffffff;"></div>
<div class="a" style="left:495px;top:803px;width:100px;height:1px;background:#8c8c8c;"></div>
<div class="a" style="left:495px;top:803px;width:1px;height:18px;background:#8c8c8c;"></div>
<div class="a" style="left:594px;top:803px;width:1px;height:19px;background:#ffffff;"></div>
<div class="a" style="left:495px;top:821px;width:100px;height:1px;background:#ffffff;"></div>
<div class="a" style="left:597px;top:803px;width:483px;height:1px;background:#8c8c8c;"></div>
<div class="a" style="left:597px;top:803px;width:1px;height:18px;background:#8c8c8c;"></div>
<div class="a" style="left:1079px;top:803px;width:1px;height:19px;background:#ffffff;"></div>
<div class="a" style="left:597px;top:821px;width:483px;height:1px;background:#ffffff;"></div>
<div class="a" style="left:56px;top:804px;width:1px;height:18px;background:#f0f0f0;"></div>
<svg class="a" style="left:1060px;top:800px;border-radius:0 0 3px 0;overflow:hidden" width="20" height="22"><polygon points="5.3,22 20,7.3 20,22" fill="#fff"/><path d="M18.8,10.4 L8.4,20.6 M18.8,14.4 L12.4,20.6 M18.8,18.3 L16.4,20.6" stroke="#8a8a8a" stroke-width="1.4" stroke-linecap="round"/></svg>
<div class="a" style="left:1079px;top:821px;width:1px;height:1px;background:#000;"></div>
<div class="a" style="left:1079px;top:820px;width:1px;height:1px;background:#555;"></div>
<div class="a" style="left:1078px;top:821px;width:1px;height:1px;background:#555;"></div>
<div class="a" style="left:56px;top:821px;width:1px;height:1px;background:#000;"></div>
<div class="a" style="left:56px;top:820px;width:1px;height:1px;background:#555;"></div>
<div class="a" style="left:57px;top:821px;width:1px;height:1px;background:#555;"></div>
</body></html>
